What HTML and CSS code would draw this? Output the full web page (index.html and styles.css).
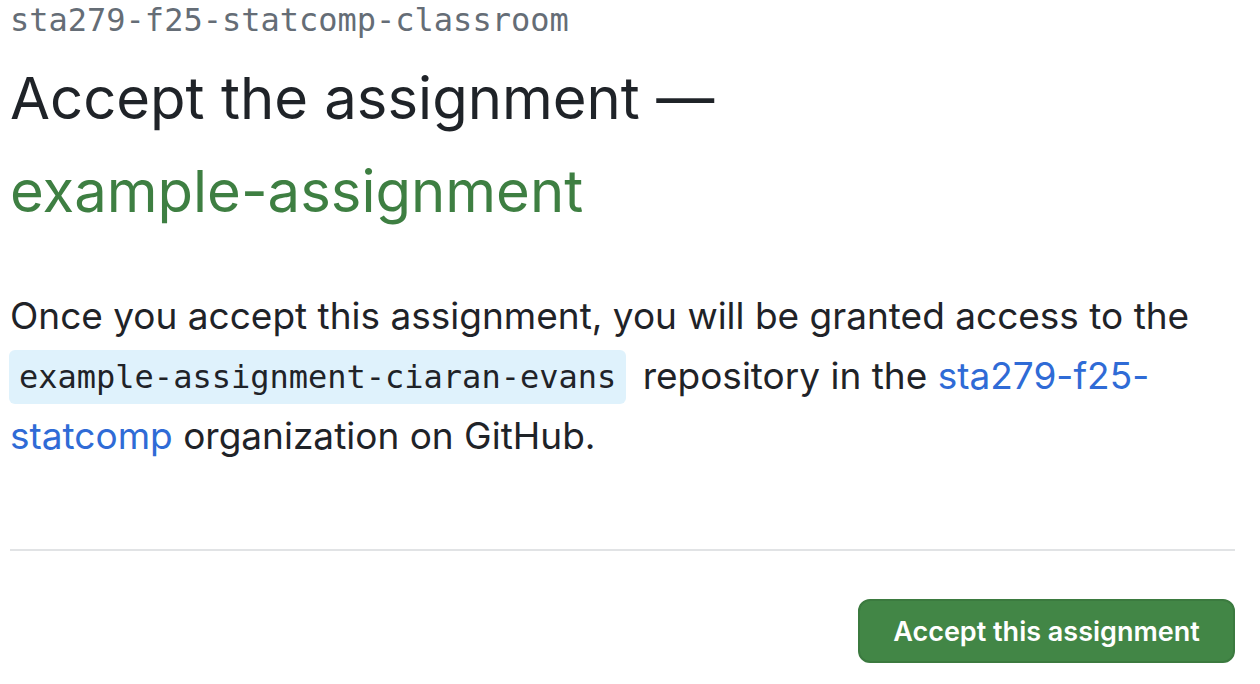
FILE: index.html
```html
<!DOCTYPE html>
<html>
<head>
<meta charset="utf-8">
<link rel="stylesheet" href="styles.css">
</head>
<body>
<main class="page">
  <div class="org">sta279-f25-statcomp-classroom</div>
  <h1 class="title">Accept the assignment —<br><span class="assignment">example-assignment</span></h1>
  <p class="lead">Once you accept this assignment, you will be granted access to the <code class="repo">example-assignment-ciaran-evans</code> repository in the <a class="link" href="#">sta279-f25-statcomp</a> organization on GitHub.</p>
  <hr class="divider">
  <div class="actions">
    <button class="btn-primary">Accept this assignment</button>
  </div>
</main>
</body>
</html>
```
FILE: styles.css
```css
html, body {
  margin: 0;
  padding: 0;
  background: #ffffff;
}
body {
  font-family: "Inter", "Liberation Sans", sans-serif;
  color: #1f2328;
}
.page {
  width: 1225px;
  padding: 0 0 0 10px;
}
.org {
  font-family: "DejaVu Sans Mono", monospace;
  font-size: 32px;
  line-height: 40px;
  color: #656d76;
}
.title {
  margin: 12px 0 0 0;
  font-size: 58px;
  font-weight: 400;
  line-height: 93px;
}
.assignment {
  color: #3e7f42;
}
.lead {
  margin: 48px 0 0 0;
  font-size: 37px;
  line-height: 60px;
}
.repo {
  display: inline-block;
  vertical-align: middle;
  font-family: "DejaVu Sans Mono", monospace;
  font-size: 32px;
  line-height: 38px;
  background: #dff2fc;
  border-radius: 6px;
  padding: 8px 10px;
  margin: -4px 6px 0 -1px;
}
.link {
  color: #2f6bd6;
  text-decoration: none;
}
.divider {
  margin: 83px 0 0 0;
  border: 0;
  height: 2px;
  background: #e1e3e5;
}
.actions {
  display: flex;
  justify-content: flex-end;
  margin-top: 48px;
}
.btn-primary {
  font-family: "Inter", "Liberation Sans", sans-serif;
  font-size: 27px;
  font-weight: 600;
  color: #ffffff;
  background: #428646;
  border: 2px solid #3b7a3f;
  border-radius: 12px;
  width: 377px;
  height: 64px;
  padding: 0;
}
```
